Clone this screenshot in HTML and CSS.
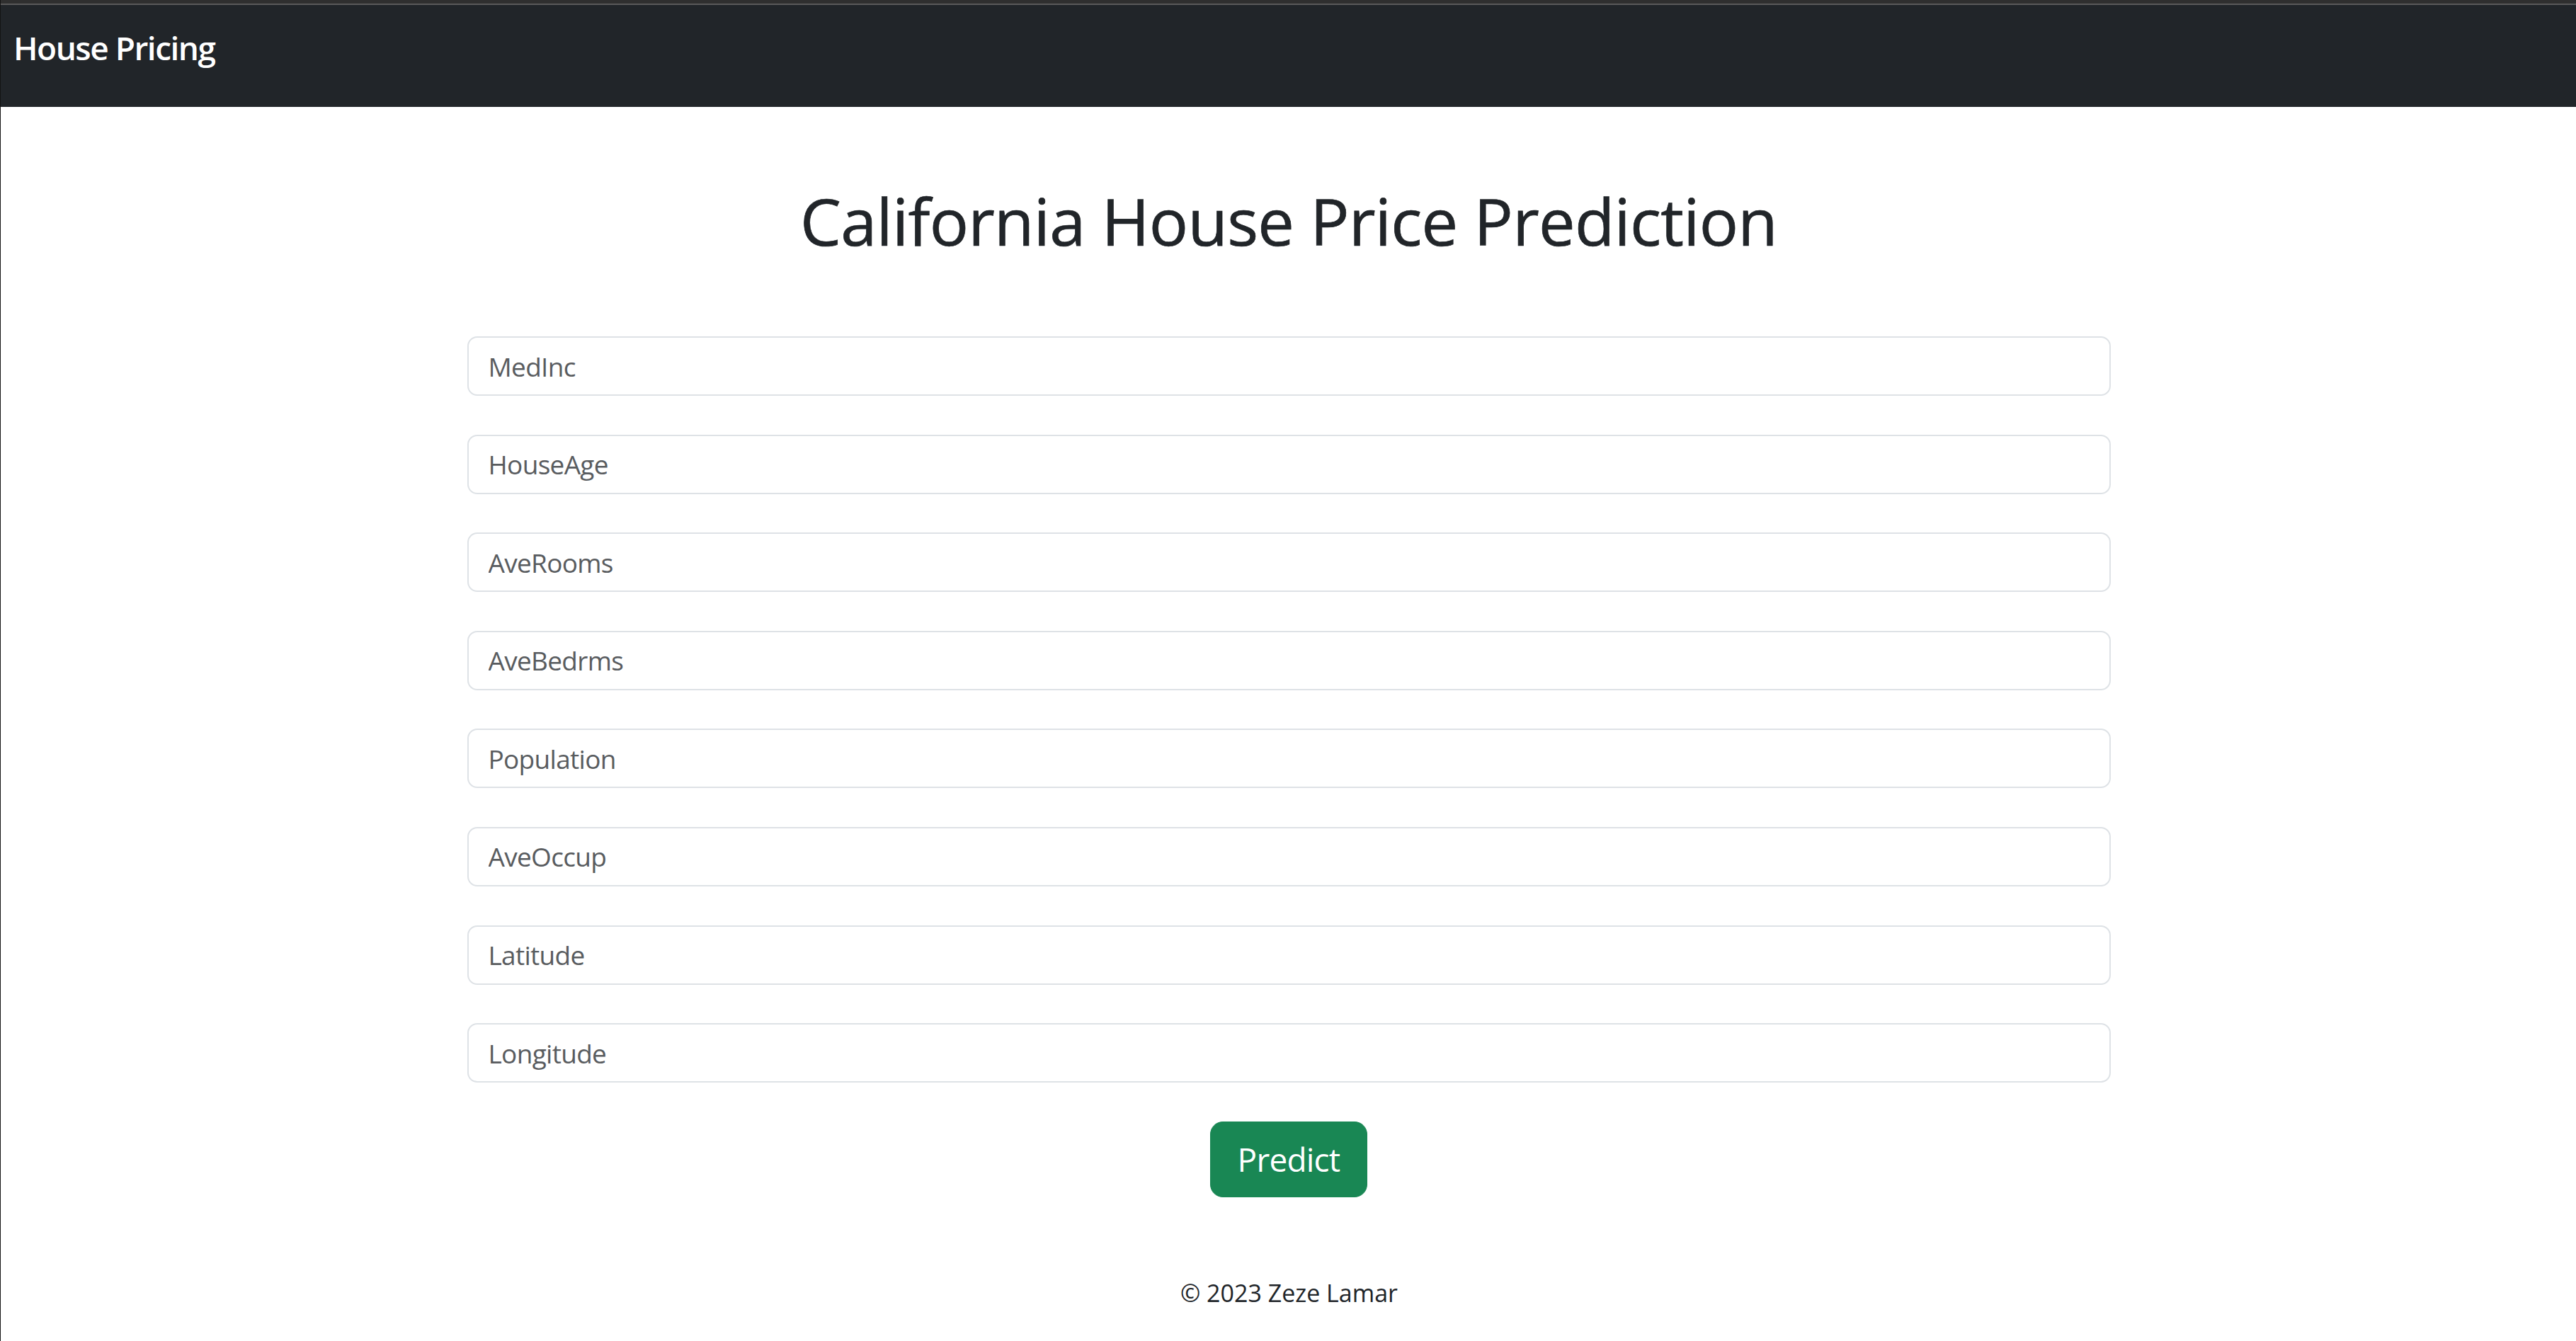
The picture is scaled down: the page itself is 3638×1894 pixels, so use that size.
FILE: index.html
```html
<!DOCTYPE html>
<html lang="en">
<head>
<meta charset="utf-8">
<title>House Pricing</title>
<link rel="stylesheet" href="styles.css">
</head>
<body>
<div class="chrome"></div>
<nav class="navbar">
  <a class="brand" href="#">House Pricing</a>
</nav>
<main class="main">
  <h1 class="title">California House Price Prediction</h1>
  <form class="form">
    <input class="field" type="text" placeholder="MedInc">
    <input class="field" type="text" placeholder="HouseAge">
    <input class="field" type="text" placeholder="AveRooms">
    <input class="field" type="text" placeholder="AveBedrms">
    <input class="field" type="text" placeholder="Population">
    <input class="field" type="text" placeholder="AveOccup">
    <input class="field" type="text" placeholder="Latitude">
    <input class="field" type="text" placeholder="Longitude">
    <button class="btn" type="button">Predict</button>
  </form>
</main>
<footer class="footer">© 2023 Zeze Lamar</footer>
</body>
</html>
```

FILE: styles.css
```css
* { box-sizing: border-box; }

html, body {
  margin: 0;
  padding: 0;
}

body {
  min-height: 1894px;
  background: #ffffff;
  border-left: 1px solid #141414;
  font-family: "Open Sans", "Noto Sans", "Liberation Sans", sans-serif;
  color: #212529;
}

.chrome {
  height: 7px;
  background: #2f2f2f;
  border-bottom: 2px solid #5a5a5a;
}

.navbar {
  height: 144px;
  background: #212529;
  padding: 26px 0 0 18px;
}

.brand {
  display: inline-block;
  color: #ffffff;
  text-decoration: none;
  font-size: 46px;
  line-height: 69px;
  font-weight: 600;
  letter-spacing: -1.5px;
}

.main {
  width: 2322px;
  margin: 0 auto;
  padding: 106px 0 0 1px;
}

.title {
  margin: 0 0 108px;
  text-align: center;
  font-size: 92px;
  line-height: 110px;
  font-weight: 500;
  letter-spacing: -0.75px;
  color: #212529;
  -webkit-text-stroke: 0.7px #212529;
}

.form {
  display: flex;
  flex-direction: column;
  align-items: center;
  gap: 54.6px;
}

.field {
  display: block;
  width: 100%;
  height: 84px;
  padding: 0 28px;
  font-family: inherit;
  font-size: 37px;
  letter-spacing: -0.7px;
  color: #212529;
  background: #ffffff;
  border: 2px solid #dee2e6;
  border-radius: 14px;
  outline: none;
}

.field::placeholder {
  color: #595c5f;
  opacity: 1;
}

.btn {
  height: 107px;
  padding: 0 38px;
  font-family: inherit;
  font-size: 46px;
  line-height: 69px;
  color: #ffffff;
  background: #198754;
  border: 1px solid #198754;
  border-radius: 18px;
  letter-spacing: -0.8px;
}

.footer {
  margin-top: 110px;
  padding-left: 2px;
  text-align: center;
  font-size: 34px;
  line-height: 51px;
  color: #212529;
}
```
